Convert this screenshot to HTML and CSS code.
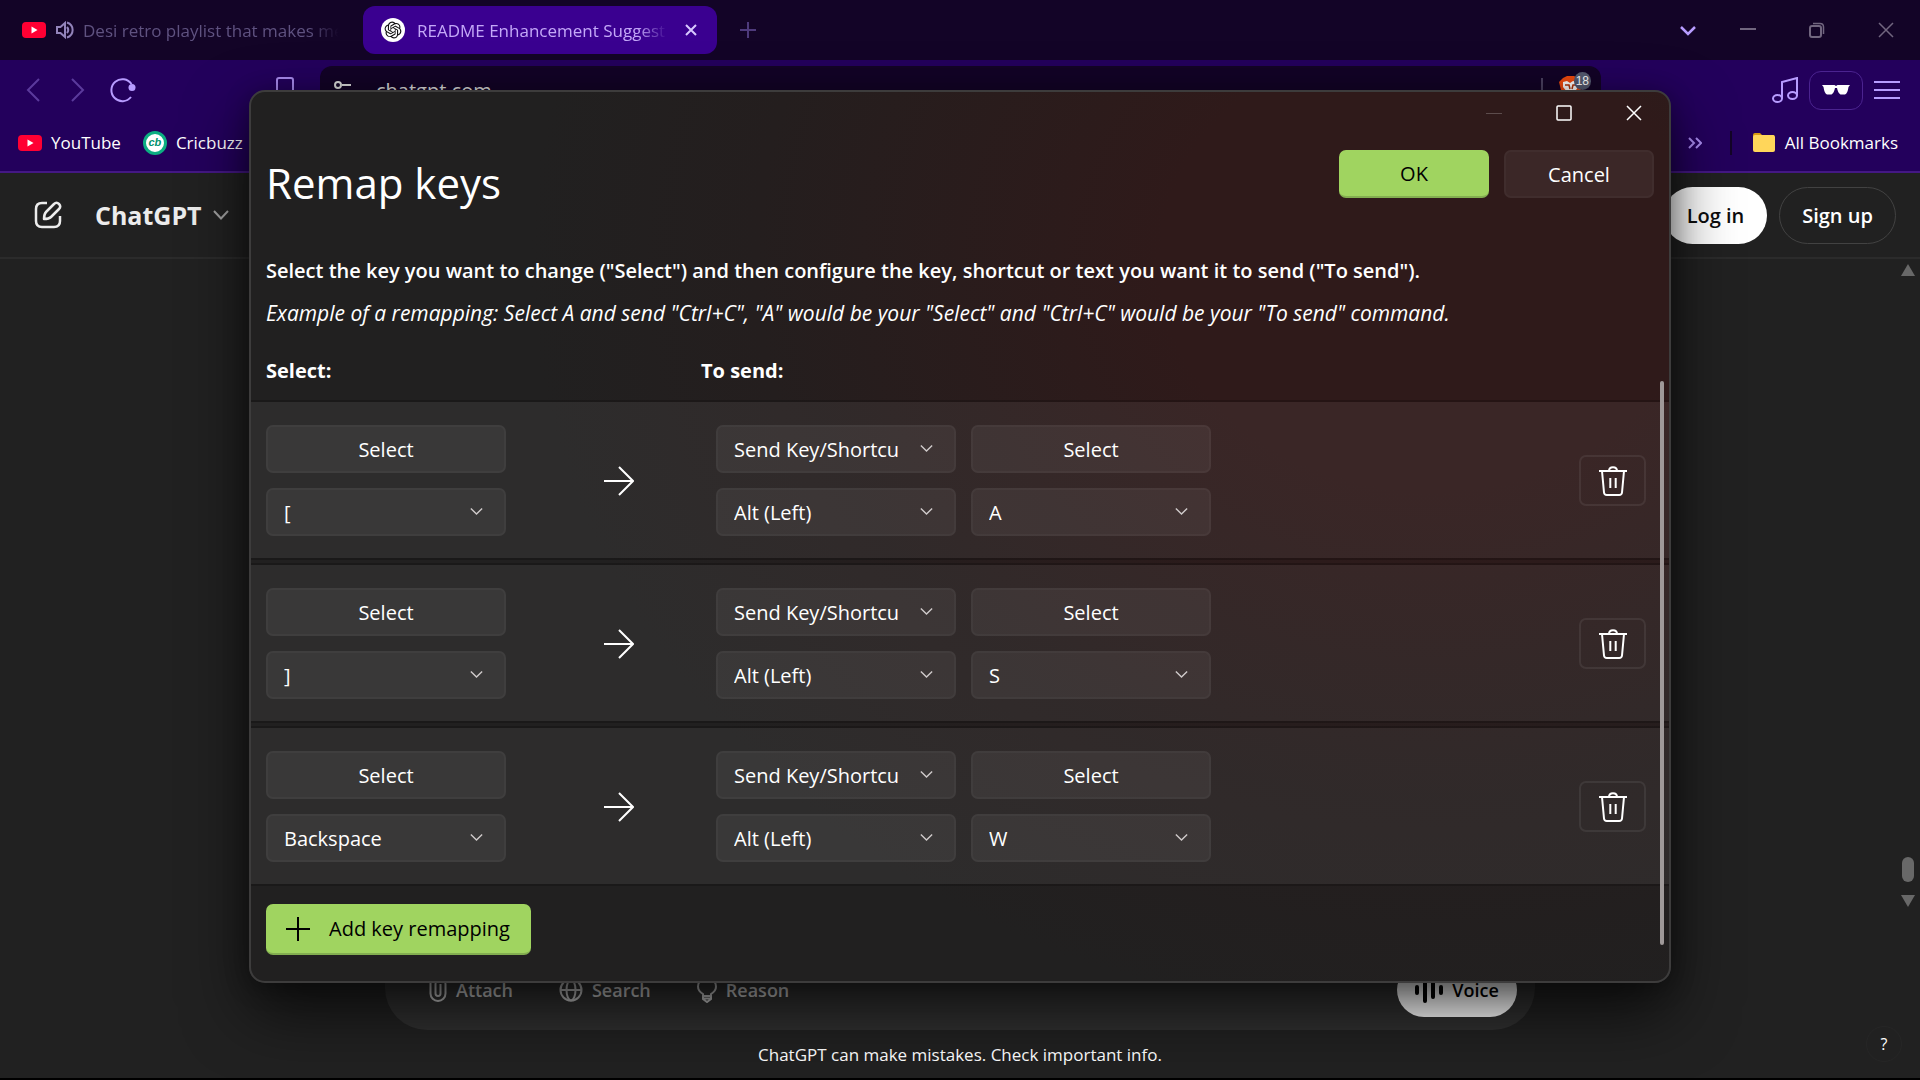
FILE: index.html
```html
<!DOCTYPE html>
<html lang="en">
<head>
<meta charset="utf-8">
<meta name="viewport" content="width=device-width, initial-scale=1">
<title>Remap keys</title>
<link rel="stylesheet" href="styles.css">
</head>
<body>
<svg class="defs" aria-hidden="true">
  <symbol id="yt" viewBox="0 0 24 16"><rect width="24" height="16" rx="4" fill="#ff0033"/><path d="M9.500 4.500 15.500 8 9.500 11.500z" fill="#fff"/></symbol>
  <symbol id="chev" viewBox="0 0 12 12"><path d="M.8 3.200 6 8.400 11.200 3.200" fill="none" stroke="currentColor" stroke-width="1.300"/></symbol>
  <symbol id="arrow" viewBox="0 0 30 30"><path d="M0 15H28M15 1 29 15 15 29" fill="none" stroke="currentColor" stroke-width="2"/></symbol>
  <symbol id="trash" viewBox="0 0 28 30"><path d="M0 5H28M10 5C10 0 18 0 18 5M3 5 5 26.500Q5.300 29 7.800 29H20.200Q22.700 29 23 26.500L25 5M11.300 12V22M16.700 12V22" fill="none" stroke="currentColor" stroke-width="2"/></symbol>
</svg>

<header class="browser">
  <div class="tabs">
    <a class="tab" href="#">
      <svg class="ic24" viewBox="0 0 24 24"><use href="#yt" y="4" width="24" height="16"/></svg>
      <svg class="sound" viewBox="0 0 18 18"><path d="M1 6H4.500L9 2V16L4.500 12H1z" fill="none" stroke="#9384bb" stroke-width="2"/><path d="M11 6Q13.500 9 11 12M11 1.500C18.500 4 18.500 14 11 16.500" fill="none" stroke="#9384bb" stroke-width="2"/></svg>
      <span class="tabname">Desi retro playlist that makes me</span>
    </a>
    <div class="tab active">
      <svg class="ic24" viewBox="0 0 24 24"><circle cx="12" cy="12" r="12" fill="#fff"/><g transform="translate(3.600 3.600) scale(.7)"><path fill="#111" d="M22.282 9.821a5.985 5.985 0 0 0-.516-4.910 6.046 6.046 0 0 0-6.510-2.900A6.065 6.065 0 0 0 4.981 4.182a5.985 5.985 0 0 0-3.998 2.900 6.046 6.046 0 0 0 .743 7.097 5.980 5.980 0 0 0 .510 4.911 6.051 6.051 0 0 0 6.515 2.900A5.985 5.985 0 0 0 13.260 24a6.056 6.056 0 0 0 5.772-4.206 5.990 5.990 0 0 0 3.998-2.900 6.056 6.056 0 0 0-.748-7.073zM13.260 22.430a4.476 4.476 0 0 1-2.876-1.040l.141-.081 4.779-2.758a.795.795 0 0 0 .392-.681v-6.737l2.020 1.169a.071.071 0 0 1 .038.052v5.583a4.504 4.504 0 0 1-4.494 4.493zM3.600 18.304a4.470 4.470 0 0 1-.535-3.014l.142.085 4.783 2.759a.771.771 0 0 0 .780 0l5.843-3.369v2.332a.080.080 0 0 1-.033.062L9.740 19.950a4.500 4.500 0 0 1-6.140-1.646zM2.341 7.896a4.485 4.485 0 0 1 2.365-1.973V11.600a.766.766 0 0 0 .388.677l5.815 3.354-2.020 1.169a.076.076 0 0 1-.071 0l-4.830-2.787A4.504 4.504 0 0 1 2.341 7.872zm16.596 3.856-5.833-3.387L15.119 7.200a.076.076 0 0 1 .071 0l4.830 2.791a4.494 4.494 0 0 1-.677 8.105v-5.678a.790.790 0 0 0-.406-.667zm2.011-3.023-.142-.085-4.773-2.782a.776.776 0 0 0-.785 0L9.409 9.230V6.897a.066.066 0 0 1 .028-.061l4.830-2.787a4.500 4.500 0 0 1 6.681 4.660zM8.307 12.863l-2.020-1.164a.080.080 0 0 1-.038-.057V6.075a4.500 4.500 0 0 1 7.375-3.454l-.142.080L8.704 5.460a.795.795 0 0 0-.393.681zm1.097-2.366L12.006 9l2.607 1.500v2.999l-2.597 1.500-2.607-1.500z"/></g></svg>
      <span class="tabname">README Enhancement Suggest</span>
      <button class="plain" aria-label="Close tab"><svg width="12" height="12" viewBox="0 0 12 12"><path d="M1 1 11 11M11 1 1 11" stroke="#d8c8ff" stroke-width="2"/></svg></button>
    </div>
    <button class="plain newtab" aria-label="New tab"><svg width="16" height="16" viewBox="0 0 16 16"><path d="M8 0V16M0 8H16" stroke="#4e3a7c" stroke-width="2"/></svg></button>
    <div class="winbtns">
      <button class="plain" aria-label="Search tabs"><svg width="16" height="16" viewBox="0 0 16 16"><path d="M1 5 8 12 15 5" fill="none" stroke="#b79cff" stroke-width="2.500"/></svg></button>
      <button class="plain" aria-label="Minimize"><svg width="16" height="16" viewBox="0 0 16 16"><path d="M0 7H16" stroke="#71667f" stroke-width="2"/></svg></button>
      <button class="plain" aria-label="Restore"><svg width="16" height="16" viewBox="0 0 16 16"><rect x="1" y="4" width="11" height="11" rx="2" fill="none" stroke="#71667f" stroke-width="2"/><path d="M4 1.500H11Q14.500 1.500 14.500 5V12" fill="none" stroke="#71667f" stroke-width="1.500"/></svg></button>
      <button class="plain" aria-label="Close"><svg width="16" height="16" viewBox="0 0 16 16"><path d="M1 1 15 15M15 1 1 15" stroke="#71667f" stroke-width="1.500"/></svg></button>
    </div>
  </div>

  <div class="toolbar">
    <div class="nav">
      <button class="plain" aria-label="Back"><svg width="14" height="24" viewBox="0 0 14 24"><path d="M13 1 2 12 13 23" fill="none" stroke="#5b3a9c" stroke-width="2"/></svg></button>
      <button class="plain" aria-label="Forward"><svg width="14" height="24" viewBox="0 0 14 24"><path d="M1 1 12 12 1 23" fill="none" stroke="#5b3a9c" stroke-width="2"/></svg></button>
      <button class="plain" aria-label="Reload"><svg width="26" height="26" viewBox="0 0 26 26"><path d="M21.500 7A11 11 0 1 0 21 20" fill="none" stroke="#b79cff" stroke-width="2"/><circle cx="22" cy="10.500" r="3.500" fill="#b79cff"/></svg></button>
    </div>
    <button class="plain mark" aria-label="Bookmark"><svg width="18" height="26" viewBox="0 0 18 26"><path d="M1 25V3Q1 1 3 1H15Q17 1 17 3V25L9 19z" fill="none" stroke="#a98bef" stroke-width="2"/></svg></button>
    <div class="address">
      <svg width="18" height="18" viewBox="0 0 18 18"><g fill="none" stroke="#ddd" stroke-width="2"><circle cx="4" cy="4" r="3"/><path d="M8 4H17M1 14H9"/><circle cx="14" cy="14" r="3"/></g></svg>
      <input class="url" aria-label="Address" value="chatgpt.com">
      <span class="bar"></span>
      <div class="shield">
        <svg width="24" height="28" viewBox="0 0 24 28"><path d="M4 2 8 0H15L19 2 23 6 21 18 12 27 3 18 0 6z" fill="#f04a0e"/><path d="M4 6 8 5 11 7 14 5 18 6 19 11 15 17 12 18 9 17 4 11z" fill="#fff"/><path d="M6 9H10L11 13M18 9H14L13 13" stroke="#b23408" stroke-width="1.500" fill="none"/></svg>
        <span class="count">18</span>
      </div>
    </div>
    <div class="tools">
      <button class="plain" aria-label="Media"><svg width="26" height="26" viewBox="0 0 26 26"><g fill="none" stroke="#b79cff" stroke-width="2"><ellipse cx="5.500" cy="21.500" rx="4.500" ry="3.500"/><ellipse cx="20.500" cy="18.500" rx="4.500" ry="3.500"/><path d="M10 21.500V5L25 1V18.500"/></g></svg></button>
      <button class="plain private" aria-label="Private window"><svg width="28" height="12" viewBox="0 0 28 12"><path d="M0 1H12.500L14 2 15.500 1H28L26.500 3Q25.500 10 23 10.500H18.500Q16 9 15 4H13Q12 9 9.500 10.500H5Q2.500 10 1.500 3z" fill="#fff"/></svg></button>
      <button class="plain" aria-label="Menu"><svg width="26" height="20" viewBox="0 0 26 20"><path d="M0 2H26M0 10H26M0 18H26" stroke="#b79cff" stroke-width="2"/></svg></button>
    </div>
  </div>

  <nav class="bookmarks">
    <a href="#"><svg class="ic24" viewBox="0 0 24 24"><use href="#yt" y="4" width="24" height="16"/></svg>YouTube</a>
    <a href="#"><span class="cb">cb</span>Cricbuzz</a>
    <a class="all" href="#" aria-label="More"><svg width="14" height="12" viewBox="0 0 14 12"><path d="M1 1 6 6 1 11M8 1 13 6 8 11" fill="none" stroke="#a98bef" stroke-width="2"/></svg></a>
    <span class="split"></span>
    <a href="#"><svg class="ic24" viewBox="0 0 24 24"><path d="M1 4Q1 2 3 2H8L10 4H22V9H1z" fill="#d99a10"/><rect x="1" y="4" width="22" height="17" rx="2" fill="#ffd65a"/></svg>All Bookmarks</a>
  </nav>
</header>

<main class="page">
  <div class="gpt">
    <button class="plain" aria-label="New chat"><svg width="28" height="28" viewBox="0 0 28 28"><g fill="none" stroke="#ececec" stroke-width="2.500" stroke-linejoin="round"><path d="M13 2H8Q2 2 2 8V20Q2 26 8 26H20Q26 26 26 20V15"/><path d="M10 18Q10 13 12 11L20 3Q22.500 .5 25 3T25 8L17 16Q15 18 10 18z"/></g></svg></button>
    <button class="plain model">ChatGPT<svg width="16" height="16" viewBox="0 0 16 16"><path d="M1 4 8 11.500 15 4" fill="none" stroke="#a0a0a0" stroke-width="2"/></svg></button>
    <a class="pill login" href="#">Log in</a>
    <a class="pill signup" href="#">Sign up</a>
  </div>
  <div class="chat">
    <div class="composer">
      <button class="plain"><svg width="18" height="24" viewBox="0 0 18 24"><path d="M1.500 5V15.500A7.500 7.500 0 0 0 16.500 15.500V6A5 5 0 0 0 6.500 6V15.500A2.500 2.500 0 0 0 11.500 15.500V6" fill="none" stroke="currentColor" stroke-width="2"/></svg>Attach</button>
      <button class="plain"><svg width="24" height="24" viewBox="0 0 24 24"><g fill="none" stroke="currentColor" stroke-width="2"><circle cx="12" cy="12" r="10.500"/><ellipse cx="12" cy="12" rx="4.500" ry="10.500"/><path d="M1.500 12H22.500"/></g></svg>Search</button>
      <button class="plain"><svg width="20" height="26" viewBox="0 0 20 26"><path d="M6 19V17Q1 14 1 9.500A9 8.500 0 0 1 19 9.500Q19 14 14 17V19zM6 19V22L10 25 14 22V19M6 21.500H14" fill="none" stroke="currentColor" stroke-width="2"/></svg>Reason</button>
      <button class="plain voice"><svg width="28" height="26" viewBox="0 0 28 26"><path d="M2 10V16M10 2V24M18 6V20M26 10V16" stroke="#000" stroke-width="4" stroke-linecap="round"/></svg>Voice</button>
    </div>
    <p class="note">ChatGPT can make mistakes. Check important info.</p>
    <div class="scroll"><span class="up"></span><span class="thumb"></span><span class="down"></span></div>
    <button class="plain help">?</button>
  </div>
</main>

<section class="dialog" role="dialog" aria-labelledby="title">
  <div class="caption">
    <button class="plain" aria-label="Minimize dialog" disabled><svg width="16" height="16" viewBox="0 0 16 16"><path d="M0 8.500H16" stroke="#5c4c4c"/></svg></button>
    <button class="plain" aria-label="Maximize dialog"><svg width="16" height="16" viewBox="0 0 16 16"><rect x="1" y="1" width="14" height="14" rx="1" fill="none" stroke="#fff" stroke-width="1.500"/></svg></button>
    <button class="plain" aria-label="Close dialog"><svg width="16" height="16" viewBox="0 0 16 16"><path d="M1 1 15 15M15 1 1 15" stroke="#fff" stroke-width="1.500"/></svg></button>
  </div>
  <div class="head">
    <h1 id="title">Remap keys</h1>
    <button class="btn accent ok">OK</button>
    <button class="btn cancel">Cancel</button>
  </div>
  <p class="lead">Select the key you want to change ("Select") and then configure the key, shortcut or text you want it to send ("To send").</p>
  <p class="example">Example of a remapping: Select A and send "Ctrl+C", "A" would be your "Select" and "Ctrl+C" would be your "To send" command.</p>
  <div class="labels"><h2>Select:</h2><h2>To send:</h2></div>
  <ul class="rows">
    <li class="row">
      <div class="stack"><button class="btn">Select</button><div class="drop"><select aria-label="Key"><option>[</option></select><svg><use href="#chev"/></svg></div></div>
      <svg class="arrow"><use href="#arrow"/></svg>
      <div class="stack"><div class="drop"><select aria-label="Action"><option>Send Key/Shortcu</option></select><svg><use href="#chev"/></svg></div><div class="drop"><select aria-label="Modifier"><option>Alt (Left)</option></select><svg><use href="#chev"/></svg></div></div>
      <div class="stack"><button class="btn">Select</button><div class="drop"><select aria-label="Target key"><option>A</option></select><svg><use href="#chev"/></svg></div></div>
      <button class="del" aria-label="Delete remapping"><svg><use href="#trash"/></svg></button>
    </li>
    <li class="row">
      <div class="stack"><button class="btn">Select</button><div class="drop"><select aria-label="Key"><option>]</option></select><svg><use href="#chev"/></svg></div></div>
      <svg class="arrow"><use href="#arrow"/></svg>
      <div class="stack"><div class="drop"><select aria-label="Action"><option>Send Key/Shortcu</option></select><svg><use href="#chev"/></svg></div><div class="drop"><select aria-label="Modifier"><option>Alt (Left)</option></select><svg><use href="#chev"/></svg></div></div>
      <div class="stack"><button class="btn">Select</button><div class="drop"><select aria-label="Target key"><option>S</option></select><svg><use href="#chev"/></svg></div></div>
      <button class="del" aria-label="Delete remapping"><svg><use href="#trash"/></svg></button>
    </li>
    <li class="row">
      <div class="stack"><button class="btn">Select</button><div class="drop"><select aria-label="Key"><option>Backspace</option></select><svg><use href="#chev"/></svg></div></div>
      <svg class="arrow"><use href="#arrow"/></svg>
      <div class="stack"><div class="drop"><select aria-label="Action"><option>Send Key/Shortcu</option></select><svg><use href="#chev"/></svg></div><div class="drop"><select aria-label="Modifier"><option>Alt (Left)</option></select><svg><use href="#chev"/></svg></div></div>
      <div class="stack"><button class="btn">Select</button><div class="drop"><select aria-label="Target key"><option>W</option></select><svg><use href="#chev"/></svg></div></div>
      <button class="del" aria-label="Delete remapping"><svg><use href="#trash"/></svg></button>
    </li>
  </ul>
  <button class="btn accent add"><svg width="24" height="24" viewBox="0 0 24 24"><path d="M12 0V24M0 12H24" stroke="#000" stroke-width="2"/></svg>Add key remapping</button>
  <span class="track"></span>
</section>
</body>
</html>
```
FILE: styles.css
```css
* { box-sizing: border-box; }
body {
  margin: 0;
  min-height: 100vh;
  display: flex;
  flex-direction: column;
  background: #212121;
  color: #fff;
  font-family: "Open Sans", "Noto Sans", sans-serif;
  font-size: 18px;
  overflow: hidden;
  position: relative;
}
a { color: inherit; text-decoration: none; }
h1, h2, p, ul { margin: 0; padding: 0; font-weight: 400; list-style: none; }
button, input, select { font: inherit; color: inherit; }
svg { display: block; flex: none; }
.defs { position: absolute; width: 0; height: 0; }
.plain { border: 0; background: none; padding: 0; display: flex; align-items: center; justify-content: center; }
.ic24 { width: 24px; height: 24px; }

/* Browser chrome */
.browser { background: #23005c; border-bottom: 2px solid #441884; }
.tabs { height: 60px; background: #130427; display: flex; align-items: center; }
.tab { height: 48px; width: 354px; display: flex; align-items: center; padding: 0 18px; color: #5f5280; font-size: 17px; }
.tab:first-child { width: 363px; padding: 0 22px; }
.active { background: #3a0090; border-radius: 12px; color: #c4a8f8; }
.sound { width: 18px; height: 18px; margin-left: 10px; }
.tabname {
  flex: 1;
  margin-left: 9px;
  overflow: hidden;
  white-space: nowrap;
  max-width: 256px;
  -webkit-mask-image: linear-gradient(90deg, #000 88%, transparent);
  mask-image: linear-gradient(90deg, #000 88%, transparent);
}
.active .tabname { max-width: 250px; margin-right: 18px; margin-left: 12px; }
.newtab { width: 62px; }
.winbtns { margin-left: auto; display: flex; padding-right: 26px; gap: 53px; }
.winbtns .plain:first-child { margin-right: -9px; }

.toolbar { height: 60px; display: flex; align-items: center; padding-right: 20px; }
.nav { display: flex; gap: 29px; width: 276px; padding-left: 26px; }
.nav .plain + .plain { margin-left: 2px; }
.nav .plain:last-child { margin-left: -4px; }
.mark { width: 18px; }
.address { flex: 1; margin-left: 26px; height: 48px; background: #130427; border-radius: 12px; display: flex; align-items: center; padding: 0 10px 0 14px; }
.url { flex: 1; border: 0; background: none; margin-left: 24px; padding: 0; min-width: 0; color: #ddd; font-size: 20px; }
.bar { width: 2px; height: 24px; background: #4b4060; }
.shield { display: flex; margin-left: 16px; width: 32px; position: relative; }
.count { position: absolute; right: 0; top: -4px; background: #555a70; border-radius: 9px; padding: 0 2px; font: 12px/18px "Liberation Sans", Arial, sans-serif; }
.tools { display: flex; align-items: center; gap: 11px; margin-left: 171px; }
.private { width: 54px; height: 39px; border: 1px solid #4b2390; border-radius: 12px; }

.bookmarks { height: 51px; display: flex; align-items: center; padding: 0 22px 6px 18px; }
.bookmarks a { display: flex; align-items: center; gap: 9px; margin-right: 22px; font-size: 17px; }
.bookmarks a:last-child { margin: 0 0 0 20px; }
.cb { width: 24px; height: 24px; border: 3px solid #0cae82; border-radius: 50%; background: #fff; color: #009270; font: italic bold 11px/17px "Liberation Sans", Arial, sans-serif; text-align: center; }
.bookmarks .all { margin-left: auto; margin-right: 28px; }
.split { width: 2px; height: 24px; background: #130427; }

/* Chat page */
.page { flex: 1; display: flex; flex-direction: column; border-bottom: 2px solid #000; }
.gpt { height: 86px; border-bottom: 2px solid #2b2b2b; display: flex; align-items: center; padding: 0 24px 0 34px; }
.model { font-weight: 700; font-size: 25px; gap: 11px; margin-left: 33px; color: #ececec; }
.pill { height: 57px; border-radius: 29px; font-weight: 600; font-size: 20px; display: flex; align-items: center; justify-content: center; }
.login { margin-left: auto; background: #fff; color: #0d0d0d; width: 103px; }
.signup { margin-left: 12px; width: 117px; border: 1px solid #424242; }
.chat { flex: 1; display: flex; flex-direction: column; justify-content: flex-end; align-items: center; position: relative; padding-bottom: 10px; }
.composer { width: 60%; max-width: 1150px; height: 150px; border-radius: 42px; background: #303030; display: flex; align-items: flex-end; gap: 46px; padding: 0 18px 13px 44px; color: #c4c4c4; font-weight: 600; margin-bottom: 12px; }
.composer .plain { height: 54px; gap: 9px; font-size: 18px; }
.composer .voice { margin-left: auto; width: 120px; border-radius: 27px; background: #fff; color: #000; }
.note { line-height: 26px; font-size: 17px; }
.scroll { position: absolute; right: 6px; top: 5px; bottom: 171px; width: 12px; display: flex; flex-direction: column; align-items: center; }
.up, .down { width: 14px; height: 12px; background: #686868; clip-path: polygon(50% 0, 100% 100%, 0 100%); }
.down { transform: rotate(180deg); margin-top: 13px; }
.thumb { margin-top: auto; width: 12px; height: 25px; border-radius: 6px; background: #686868; }
.help { position: absolute; right: 18px; bottom: 16px; width: 36px; height: 36px; border-radius: 50%; font-size: 16px; border: 1px solid #262626; }

/* Remap dialog */
.dialog {
  position: absolute;
  top: 90px;
  left: 249px;
  right: 249px;
  border: 2px solid #3d3c3c;
  border-radius: 16px;
  background: radial-gradient(ellipse 900px 760px at 1180px 170px, #2f1a1a 0, #2f1a1a 30%, #241e1e 75%, #212020 100%);
  box-shadow: 0 28px 64px rgba(0, 0, 0, .65), 0 4px 24px rgba(0, 0, 0, .3);
  font-size: 20px;
  padding-bottom: 26px;
}
.caption { height: 41px; display: flex; align-items: center; justify-content: flex-end; gap: 54px; padding-right: 27px; }
.head { display: flex; align-items: flex-start; padding: 17px 15px 0; gap: 15px; height: 116px; }
h1 { flex: 1; font-size: 42px; line-height: 66px; }
.lead, .example { padding-left: 15px; line-height: 43px; white-space: nowrap; }
.lead { font-weight: 600; }
.example { font-style: italic; font-size: 21px; }
.labels { display: grid; grid-template-columns: 435px 1fr; padding: 21px 0 0 15px; height: 65px; align-items: start; }
h2 { font-size: 20px; font-weight: 700; line-height: 30px; }
.rows { display: flex; flex-direction: column; gap: 3px; }
.row {
  display: grid;
  grid-template-columns: 240px 180px 240px 240px 1fr;
  column-gap: 15px;
  align-items: center;
  padding: 23px 23px 22px 15px;
  border: 2px solid rgba(0, 0, 0, .2);
  border-width: 2px 0;
  background-clip: padding-box;
  background-color: rgba(255, 255, 255, .055);
}
.stack { display: grid; gap: 15px; }
.btn, select {
  height: 48px;
  width: 100%;
  border: 2px solid rgba(255, 255, 255, .03);
  border-radius: 7px;
  background: rgba(255, 255, 255, .06);
}
.btn { padding: 0; }
.drop { position: relative; }
select { appearance: none; padding: 0 48px 0 16px; }
option { color: #000; }
.drop svg { position: absolute; right: 23px; top: 17px; width: 13px; height: 13px; color: #cfcaca; pointer-events: none; }
.arrow { width: 30px; height: 30px; margin-left: 83px; }
.del { justify-self: end; width: 67px; height: 51px; border: 2px solid rgba(255, 255, 255, .07); border-radius: 7px; background: none; display: flex; align-items: center; justify-content: center; padding: 0; }
.del svg { width: 28px; height: 30px; }
.head .btn { width: 150px; }
.btn.accent { background: #a0d460; color: #000; border: 0; border-bottom: 2px solid #83ae50; }
.btn.add { width: 265px; height: 51px; margin: 18px 0 0 15px; display: flex; align-items: center; gap: 19px; padding: 0 20px; white-space: nowrap; }
.track { position: absolute; right: 5px; top: 289px; bottom: 36px; width: 4px; border-radius: 2px; background: #9f9999; }
```
